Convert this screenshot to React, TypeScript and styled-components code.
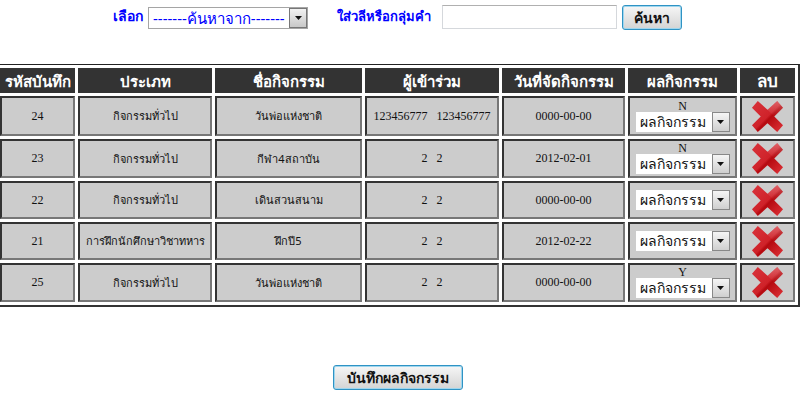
import React from "react";
import styled, { createGlobalStyle } from "styled-components";

interface IActivity {
  id: string;
  type: string;
  name: string;
  members: string;
  date: string;
  result?: string;
  rowHeight: number;
}

const activities: IActivity[] = [
  { id: "24", type: "กิจกรรมทั่วไป", name: "วันพ่อแห่งชาติ", members: "123456777\u00a0\u00a0\u00a0123456777", date: "0000-00-00", result: "N", rowHeight: 40 },
  { id: "23", type: "กิจกรรมทั่วไป", name: "กีฬา4สถาบัน", members: "2\u00a0\u00a0\u00a02", date: "2012-02-01", result: "N", rowHeight: 39 },
  { id: "22", type: "กิจกรรมทั่วไป", name: "เดินสวนสนาม", members: "2\u00a0\u00a0\u00a02", date: "0000-00-00", rowHeight: 38 },
  { id: "21", type: "การฝึกนักศึกษาวิชาทหาร", name: "ฝึกปี5", members: "2\u00a0\u00a0\u00a02", date: "2012-02-22", rowHeight: 38 },
  { id: "25", type: "กิจกรรมทั่วไป", name: "วันพ่อแห่งชาติ", members: "2\u00a0\u00a0\u00a02", date: "0000-00-00", result: "Y", rowHeight: 39 },
];

const columns = [
  { title: "รหัสบันทึก", width: 75 },
  { title: "ประเภท", width: 134 },
  { title: "ชื่อกิจกรรม", width: 147 },
  { title: "ผู้เข้าร่วม", width: 134 },
  { title: "วันที่จัดกิจกรรม", width: 123 },
  { title: "ผลกิจกรรม", width: 109 },
];

function Arrow() {
  return (
    <svg width="7" height="4" viewBox="0 0 7 4">
      <path d="M0 0h7L3.5 4z" fill="#111" />
    </svg>
  );
}

function DeleteIcon({ id }: { id: string }) {
  return (
    <svg width="33" height="33" viewBox="0 0 34 34">
      <defs>
        <linearGradient id={`x-${id}`} x1="0" y1="0" x2="1" y2="1">
          <stop offset="0" stopColor="#d9343c" />
          <stop offset="0.5" stopColor="#cf2229" />
          <stop offset="0.56" stopColor="#b50a10" />
          <stop offset="1" stopColor="#e0343a" />
        </linearGradient>
        <linearGradient id={`s-${id}`} x1="0" y1="0" x2="0" y2="1">
          <stop offset="0" stopColor="#ffffff" stopOpacity="0.28" />
          <stop offset="1" stopColor="#ffffff" stopOpacity="0" />
        </linearGradient>
      </defs>
      <path d="M7 1 17 10 27 1l6 7-9 9 9 9-6 7-10-9-10 9-6-7 9-9-9-9z" fill={`url(#x-${id})`} />
      <path d="M27 1l6 7-9 9-7-7z" fill={`url(#s-${id})`} />
    </svg>
  );
}

export default function App() {
  return (
    <Page>
      <GlobalStyle />
      <SearchBar>
        <Label>เลือก</Label>
        <SearchSelect>
          <SearchValue>-------ค้นหาจาก-------</SearchValue>
          <SearchArrow>
            <Arrow />
          </SearchArrow>
        </SearchSelect>
        <KeywordLabel>ใส่วลีหรือกลุ่มคำ</KeywordLabel>
        <SearchInput />
        <Button>ค้นหา</Button>
      </SearchBar>

      <Table>
        <colgroup>
          {columns.map((column) => (
            <col key={column.title} style={{ width: column.width }} />
          ))}
          <col style={{ width: 55 }} />
        </colgroup>
        <thead>
          <tr>
            {columns.map((column) => (
              <HeadCell key={column.title}>{column.title}</HeadCell>
            ))}
            <DeleteHeadCell>ลบ</DeleteHeadCell>
          </tr>
        </thead>
        <tbody>
          {activities.map((activity) => (
            <tr key={activity.id} style={{ height: activity.rowHeight }}>
              <Cell>{activity.id}</Cell>
              <ThaiCell>{activity.type}</ThaiCell>
              <ThaiCell>{activity.name}</ThaiCell>
              <Cell>{activity.members}</Cell>
              <Cell>{activity.date}</Cell>
              <ResultCell>
                {activity.result && <ResultMark>{activity.result}</ResultMark>}
                <ResultSelect>
                  <ResultValue>ผลกิจกรรม</ResultValue>
                  <ResultArrow>
                    <Arrow />
                  </ResultArrow>
                </ResultSelect>
              </ResultCell>
              <DeleteCell>
                <DeleteIcon id={activity.id} />
              </DeleteCell>
            </tr>
          ))}
        </tbody>
      </Table>

      <Footer>
        <SaveButton>บันทึกผลกิจกรรม</SaveButton>
      </Footer>
    </Page>
  );
}

const GlobalStyle = createGlobalStyle`
  html, body {
    margin: 0;
    padding: 0;
    background: #fff;
    overflow: hidden;
  }
`;

const Page = styled.div`
  width: 800px;
  height: 400px;
  overflow: hidden;
  font-family: Tahoma, "Noto Sans", "DejaVu Sans", sans-serif;
`;

const SearchBar = styled.div`
  height: 64px;
  box-sizing: border-box;
  padding: 5px 0 0 113px;
  display: flex;
  align-items: flex-start;
`;

const Label = styled.span`
  color: #0000ff;
  font-size: 14px;
  font-weight: bold;
  line-height: 22px;
  margin-right: 5px;
`;

const KeywordLabel = styled(Label)`
  font-size: 13px;
  margin-left: 29px;
  margin-right: 11px;
`;

const SearchSelect = styled.div`
  width: 160px;
  height: 22px;
  box-sizing: border-box;
  margin-top: 2px;
  border: 1px solid #a5a5a5;
  display: flex;
  background: #fff;
`;

const SearchValue = styled.span`
  flex: 1;
  padding-left: 4px;
  color: #0000ff;
  font-size: 15px;
  line-height: 20px;
  white-space: nowrap;
  overflow: hidden;
`;

const SearchArrow = styled.span`
  width: 18px;
  box-sizing: border-box;
  border: 1px solid #777;
  background: linear-gradient(#f2f2f2, #c8c8c8);
  display: flex;
  align-items: center;
  justify-content: center;
`;

const SearchInput = styled.input`
  width: 175px;
  height: 24px;
  box-sizing: border-box;
  border: 1px solid #d5d8dc;
  border-top-color: #b0b0b0;
  outline: none;
  padding: 0;
  margin-right: 5px;
`;

const Button = styled.button`
  height: 25px;
  padding: 0 11px;
  box-sizing: border-box;
  border: 1px solid #2f93c4;
  border-radius: 3px;
  background: linear-gradient(#f6f6f6, #d4d4d4);
  color: #111;
  font-family: inherit;
  font-size: 14px;
  font-weight: bold;
  line-height: 20px;
  box-shadow: inset 0 0 0 1px #9fd6ee;
`;

const SaveButton = styled(Button)`
  padding: 0 13px;
`;

const Table = styled.table`
  width: 803px;
  table-layout: fixed;
  border-collapse: separate;
  border-spacing: 3px;
  border-top: 1px solid #222;
  border-bottom: 2px solid #333;
  border-right: 2px solid #333;
  margin-left: -3px;
`;

const HeadCell = styled.th`
  height: 25px;
  padding: 0;
  background: #333;
  color: #fff;
  font-size: 15px;
  font-weight: bold;
  line-height: 20px;
  text-align: center;
  white-space: nowrap;
  overflow: hidden;
`;

const DeleteHeadCell = styled(HeadCell)`
  font-size: 17px;
`;

const Cell = styled.td`
  padding: 0;
  box-sizing: border-box;
  background: #ccc;
  border: 2px solid;
  border-color: #333 #777 #777 #333;
  color: #111;
  font-family: "Liberation Serif", serif;
  font-size: 12px;
  text-align: center;
  white-space: nowrap;
`;

const ThaiCell = styled(Cell)`
  font-family: Tahoma, "Noto Sans", sans-serif;
  font-size: 11px;
`;

const ResultCell = styled(Cell)`
  line-height: 12px;
`;

const ResultMark = styled.div`
  height: 11px;
  line-height: 11px;
`;

const ResultSelect = styled.div`
  width: 94px;
  height: 20px;
  box-sizing: border-box;
  margin: 0 auto;
  display: flex;
  background: #fff;
`;

const ResultValue = styled.span`
  flex: 1;
  padding-left: 4px;
  color: #111;
  font-family: Tahoma, "Noto Sans", sans-serif;
  font-size: 14px;
  line-height: 20px;
  text-align: left;
  white-space: nowrap;
`;

const ResultArrow = styled.span`
  width: 18px;
  box-sizing: border-box;
  border: 1px solid #888;
  background: linear-gradient(#f5f5f5, #cfcfcf);
  display: flex;
  align-items: center;
  justify-content: center;
`;

const DeleteCell = styled(Cell)`
  line-height: 0;
`;

const Footer = styled.div`
  margin-top: 58px;
  display: flex;
  justify-content: center;
  padding-right: 5px;
`;
